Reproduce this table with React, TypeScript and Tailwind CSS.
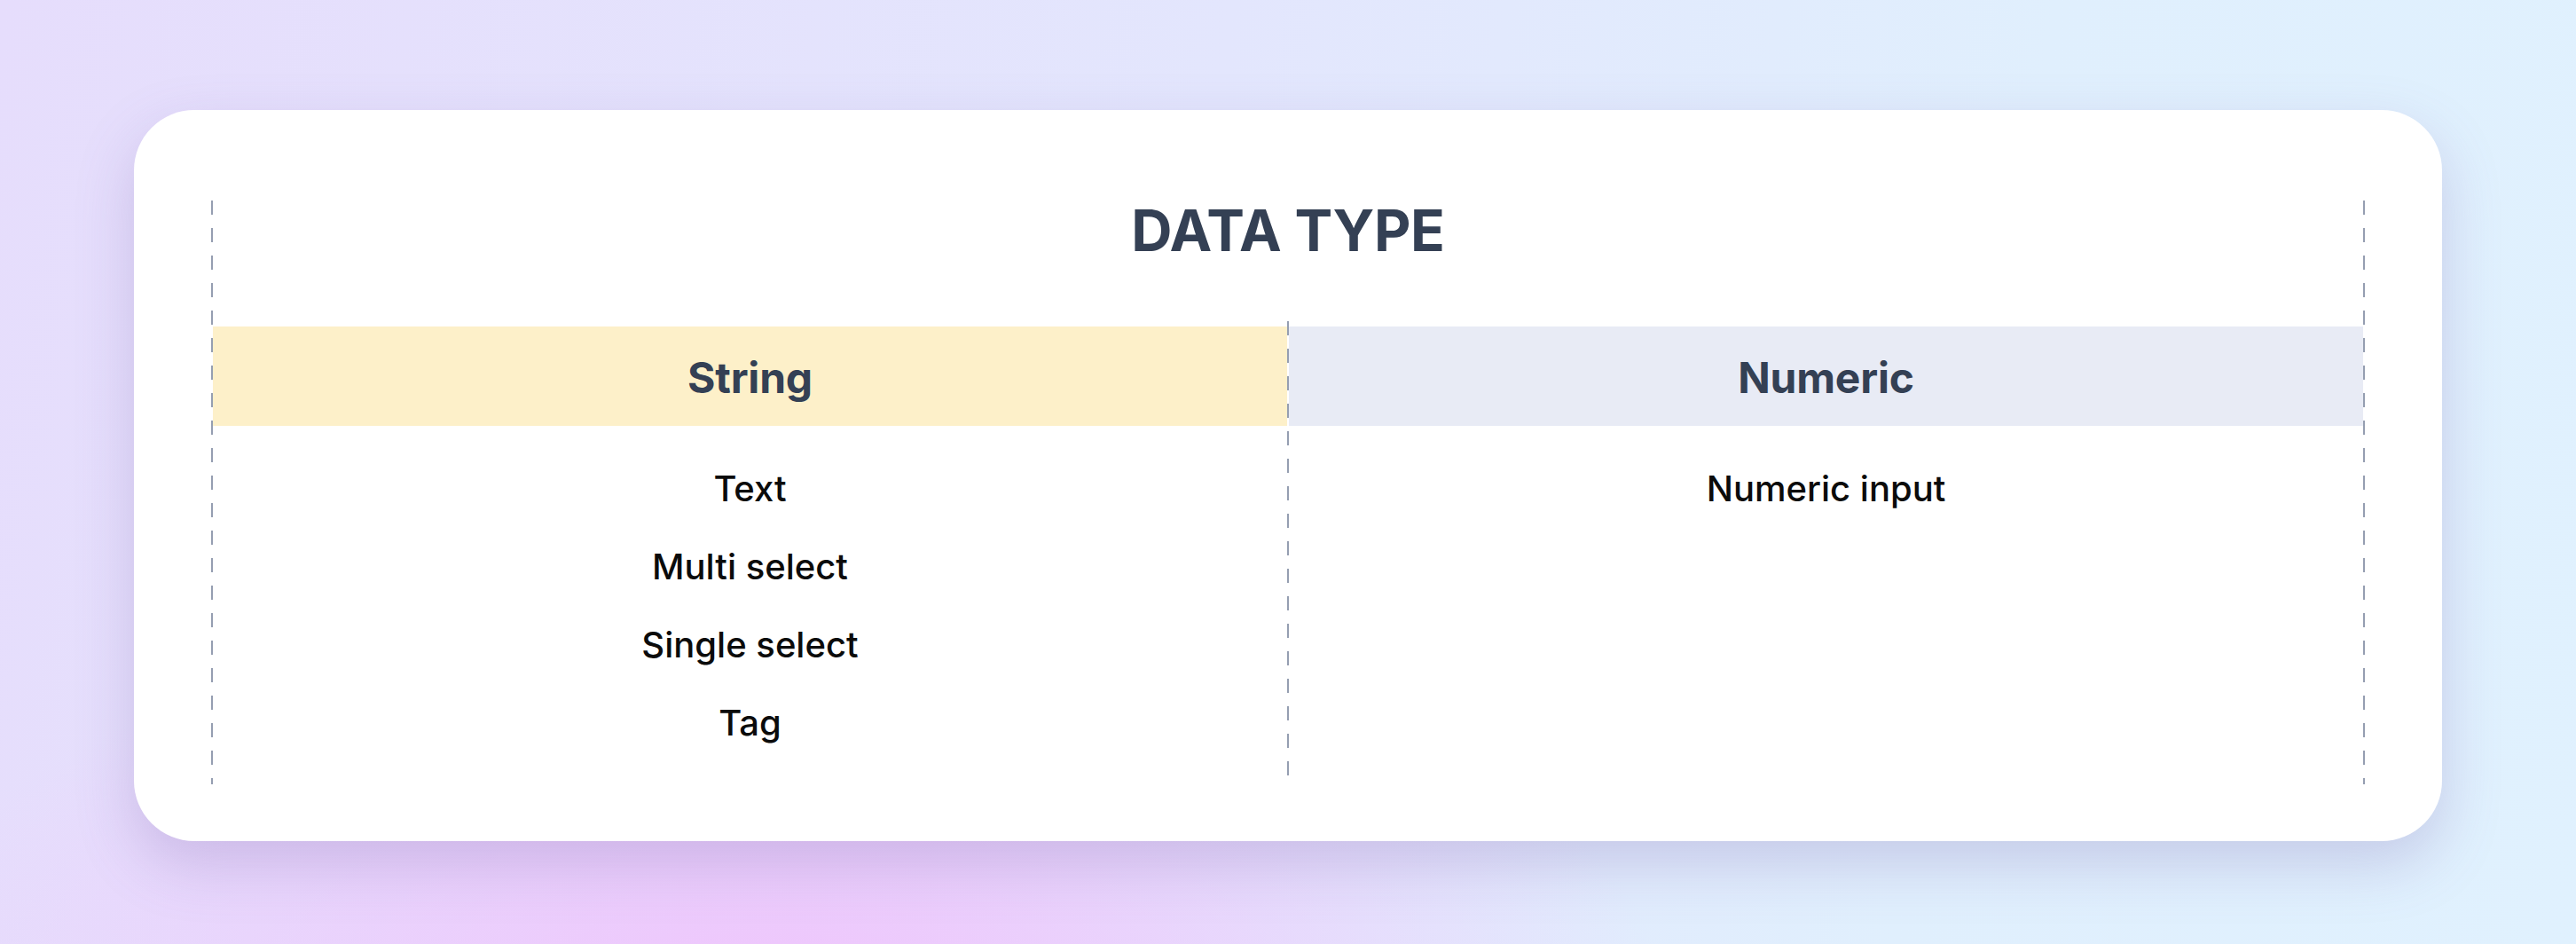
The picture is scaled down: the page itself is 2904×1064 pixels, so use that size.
const stringTypes = ["Text", "Multi select", "Single select", "Tag"];
const numericTypes = ["Numeric input"];

function Dash({ className = "" }: { className?: string }) {
  return (
    <div
      className={
        "w-[2px] shrink-0 bg-[linear-gradient(to_bottom,#959eb1_16px,transparent_16px)] bg-[length:2px_31px] bg-repeat-y " +
        className
      }
    />
  );
}

function Column({ title, band, items }: { title: string; band: string; items: string[] }) {
  return (
    <div className="flex-1 flex flex-col">
      <div className={"h-[112px] pt-[4px] flex items-center justify-center " + band}>
        <h2 className="text-[48px] leading-none font-bold text-[#344054] tracking-[-0.2px]">{title}</h2>
      </div>
      <ul className="pt-[27px] flex flex-col items-center">
        {items.map((t) => (
          <li key={t} className="text-[40px] leading-[88px] font-medium text-[#0b0b0b]">
            {t}
          </li>
        ))}
      </ul>
    </div>
  );
}

export default function App() {
  return (
    <div
      className="w-full min-h-screen h-[1064px] flex justify-center pt-[124px] font-['Inter','Noto_Sans',sans-serif] bg-[radial-gradient(ellipse_1000px_440px_at_30%_105%,#efc4fc_0%,rgba(239,196,252,0)_100%),linear-gradient(100deg,#e6ddfc_0%,#e3e6fd_45%,#e0effd_75%,#e0f1fe_100%)]"
    >
      <div className="w-[2602px] h-[824px] rounded-[68px] bg-white shadow-[0_26px_64px_rgba(120,95,170,0.25)] px-[87px] pt-[102px]">
        <div className="flex">
          <Dash className="h-[658px]" />
          <div className="flex-1 flex flex-col">
            <div className="h-[142px] pt-[2px] flex justify-center">
              <h1 className="text-[64px] leading-none font-bold text-[#344054] tracking-[-0.3px]">DATA TYPE</h1>
            </div>
            <div className="flex">
              <Column title="String" band="bg-[#fdf0c9]" items={stringTypes} />
              <Dash className="h-[522px] -mt-[6px]" />
              <Column title="Numeric" band="bg-[#e8ebf5]" items={numericTypes} />
            </div>
          </div>
          <Dash className="h-[658px]" />
        </div>
      </div>
    </div>
  );
}
